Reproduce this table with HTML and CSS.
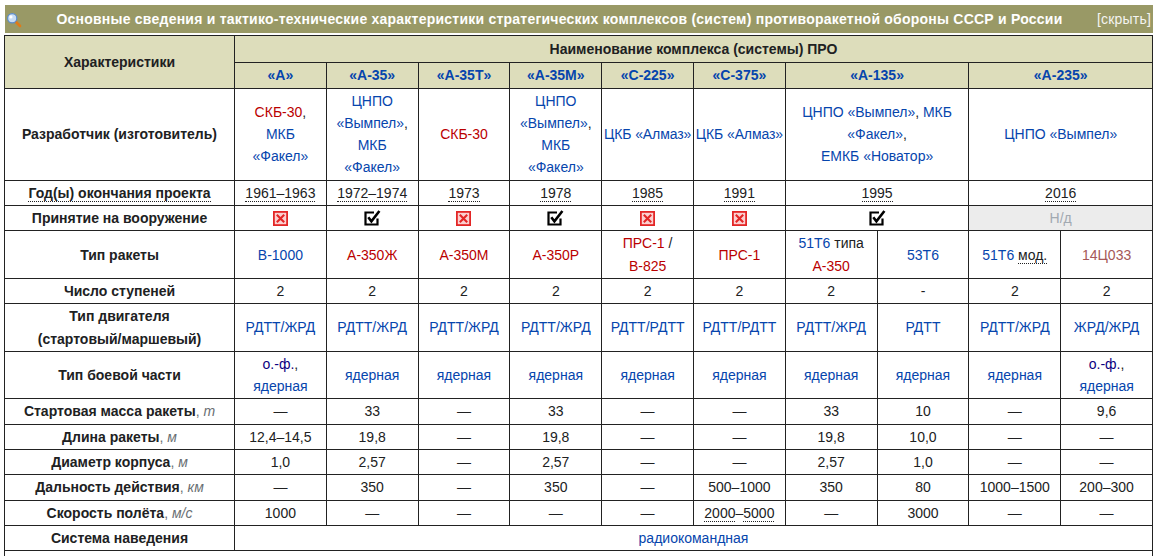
FILE: index.html
```html
<!DOCTYPE html>
<html lang="ru">
<head>
<meta charset="utf-8">
<title>ПРО СССР и России</title>
<link rel="stylesheet" href="styles.css">
</head>
<body>
<div class="page">
  <div class="titlebar">
    <svg class="icon" width="16" height="16" viewBox="0 0 16 16">
      <line x1="9.5" y1="9.5" x2="14" y2="14" stroke="#e07a18" stroke-width="2.6" stroke-linecap="round"/>
      <circle cx="6.2" cy="6.2" r="4.6" fill="#c9ddf4" stroke="#5b8ccc" stroke-width="1.2"/>
      <circle cx="4.9" cy="4.9" r="1.6" fill="#ffffff"/>
    </svg>
    <div class="title">Основные сведения и тактико-технические характеристики стратегических комплексов (систем) противоракетной обороны СССР и России</div>
    <div class="hide">[скрыть]</div>
  </div>
  <table class="ttx">
    <colgroup>
      <col class="c-lbl">
      <col><col><col><col><col><col><col><col><col><col>
    </colgroup>
    <thead>
      <tr class="h1">
        <th rowspan="2">Характеристики</th>
        <th colspan="10">Наименование комплекса (системы) ПРО</th>
      </tr>
      <tr class="h2">
        <th><a class="lk">«А»</a></th>
        <th><a class="lk">«А-35»</a></th>
        <th><a class="lk">«А-35Т»</a></th>
        <th><a class="lk">«А-35М»</a></th>
        <th><a class="lk">«С-225»</a></th>
        <th><a class="lk">«С-375»</a></th>
        <th colspan="2"><a class="lk">«А-135»</a></th>
        <th colspan="2"><a class="lk">«А-235»</a></th>
      </tr>
    </thead>
    <tbody>
      <tr>
        <td class="lbl">Разработчик (изготовитель)</td>
        <td><a class="red">СКБ-30</a>,<br><a class="lk">МКБ<br>«Факел»</a></td>
        <td><a class="lk">ЦНПО<br>«Вымпел»</a>,<br><a class="lk">МКБ<br>«Факел»</a></td>
        <td><a class="red">СКБ-30</a></td>
        <td><a class="lk">ЦНПО<br>«Вымпел»</a>,<br><a class="lk">МКБ<br>«Факел»</a></td>
        <td class="tight"><a class="lk">ЦКБ «Алмаз»</a></td>
        <td class="tight"><a class="lk">ЦКБ «Алмаз»</a></td>
        <td colspan="2"><a class="lk">ЦНПО «Вымпел»</a>, <a class="lk">МКБ<br>«Факел»</a>,<br><a class="lk">ЕМКБ «Новатор»</a></td>
        <td colspan="2"><a class="lk">ЦНПО «Вымпел»</a></td>
      </tr>
      <tr>
        <td class="lbl"><span class="dot">Год(ы) окончания проекта</span></td>
        <td><span class="dot">1961–1963</span></td>
        <td><span class="dot">1972–1974</span></td>
        <td><span class="dot">1973</span></td>
        <td><span class="dot">1978</span></td>
        <td><span class="dot">1985</span></td>
        <td><span class="dot">1991</span></td>
        <td colspan="2"><span class="dot">1995</span></td>
        <td colspan="2"><span class="dot">2016</span></td>
      </tr>
      <tr class="adopt">
        <td class="lbl">Принятие на вооружение</td>
        <td><svg class="no" width="15" height="15" viewBox="0 0 15 15"><rect x="0.9" y="0.9" width="13.2" height="13.2" fill="#fbd0d0" stroke="#e32626" stroke-width="1.8"/><path d="M3.8 3.8 L11.2 11.2 M11.2 3.8 L3.8 11.2" stroke="#e32626" stroke-width="2.1"/></svg></td>
        <td><svg class="yes" width="17" height="16" viewBox="0 0 17 16"><path d="M10 2.5 H1.5 V14.5 H13.5 V8.5" fill="none" stroke="#000" stroke-width="2.2"/><path d="M4.3 7.3 L7.4 11.4 L15.4 1" fill="none" stroke="#000" stroke-width="2.6"/></svg></td>
        <td><svg class="no" width="15" height="15" viewBox="0 0 15 15"><rect x="0.9" y="0.9" width="13.2" height="13.2" fill="#fbd0d0" stroke="#e32626" stroke-width="1.8"/><path d="M3.8 3.8 L11.2 11.2 M11.2 3.8 L3.8 11.2" stroke="#e32626" stroke-width="2.1"/></svg></td>
        <td><svg class="yes" width="17" height="16" viewBox="0 0 17 16"><path d="M10 2.5 H1.5 V14.5 H13.5 V8.5" fill="none" stroke="#000" stroke-width="2.2"/><path d="M4.3 7.3 L7.4 11.4 L15.4 1" fill="none" stroke="#000" stroke-width="2.6"/></svg></td>
        <td><svg class="no" width="15" height="15" viewBox="0 0 15 15"><rect x="0.9" y="0.9" width="13.2" height="13.2" fill="#fbd0d0" stroke="#e32626" stroke-width="1.8"/><path d="M3.8 3.8 L11.2 11.2 M11.2 3.8 L3.8 11.2" stroke="#e32626" stroke-width="2.1"/></svg></td>
        <td><svg class="no" width="15" height="15" viewBox="0 0 15 15"><rect x="0.9" y="0.9" width="13.2" height="13.2" fill="#fbd0d0" stroke="#e32626" stroke-width="1.8"/><path d="M3.8 3.8 L11.2 11.2 M11.2 3.8 L3.8 11.2" stroke="#e32626" stroke-width="2.1"/></svg></td>
        <td colspan="2"><svg class="yes" width="17" height="16" viewBox="0 0 17 16"><path d="M10 2.5 H1.5 V14.5 H13.5 V8.5" fill="none" stroke="#000" stroke-width="2.2"/><path d="M4.3 7.3 L7.4 11.4 L15.4 1" fill="none" stroke="#000" stroke-width="2.6"/></svg></td>
        <td colspan="2" class="na">Н/д</td>
      </tr>
      <tr>
        <td class="lbl">Тип ракеты</td>
        <td><a class="lk">В-1000</a></td>
        <td><a class="red">А-350Ж</a></td>
        <td><a class="red">А-350М</a></td>
        <td><a class="red">А-350Р</a></td>
        <td><a class="red">ПРС-1</a> /<br><a class="red">В-825</a></td>
        <td><a class="red">ПРС-1</a></td>
        <td><a class="lk">51Т6</a> типа<br><a class="red">А-350</a></td>
        <td><a class="lk">53Т6</a></td>
        <td><a class="lk">51Т6</a> <span class="dot">мод.</span></td>
        <td><a class="brown">14Ц033</a></td>
      </tr>
      <tr>
        <td class="lbl">Число ступеней</td>
        <td>2</td><td>2</td><td>2</td><td>2</td><td>2</td><td>2</td><td>2</td><td>-</td><td>2</td><td>2</td>
      </tr>
      <tr>
        <td class="lbl">Тип двигателя<br>(стартовый/маршевый)</td>
        <td><a class="lk">РДТТ/ЖРД</a></td>
        <td><a class="lk">РДТТ/ЖРД</a></td>
        <td><a class="lk">РДТТ/ЖРД</a></td>
        <td><a class="lk">РДТТ/ЖРД</a></td>
        <td><a class="lk">РДТТ/РДТТ</a></td>
        <td><a class="lk">РДТТ/РДТТ</a></td>
        <td><a class="lk">РДТТ/ЖРД</a></td>
        <td><a class="lk">РДТТ</a></td>
        <td><a class="lk">РДТТ/ЖРД</a></td>
        <td><a class="lk">ЖРД/ЖРД</a></td>
      </tr>
      <tr>
        <td class="lbl">Тип боевой части</td>
        <td><a class="navy">о.-ф.</a>,<br><a class="lk">ядерная</a></td>
        <td><a class="lk">ядерная</a></td>
        <td><a class="lk">ядерная</a></td>
        <td><a class="lk">ядерная</a></td>
        <td><a class="lk">ядерная</a></td>
        <td><a class="lk">ядерная</a></td>
        <td><a class="lk">ядерная</a></td>
        <td><a class="lk">ядерная</a></td>
        <td><a class="lk">ядерная</a></td>
        <td><a class="navy">о.-ф.</a>,<br><a class="lk">ядерная</a></td>
      </tr>
      <tr>
        <td class="lbl">Стартовая масса ракеты<span class="unit">, <i>т</i></span></td>
        <td>—</td><td>33</td><td>—</td><td>33</td><td>—</td><td>—</td><td>33</td><td>10</td><td>—</td><td>9,6</td>
      </tr>
      <tr>
        <td class="lbl">Длина ракеты<span class="unit">, <i>м</i></span></td>
        <td>12,4–14,5</td><td>19,8</td><td>—</td><td>19,8</td><td>—</td><td>—</td><td>19,8</td><td>10,0</td><td>—</td><td>—</td>
      </tr>
      <tr>
        <td class="lbl">Диаметр корпуса<span class="unit">, <i>м</i></span></td>
        <td>1,0</td><td>2,57</td><td>—</td><td>2,57</td><td>—</td><td>—</td><td>2,57</td><td>1,0</td><td>—</td><td>—</td>
      </tr>
      <tr>
        <td class="lbl">Дальность действия<span class="unit">, <i>км</i></span></td>
        <td>—</td><td>350</td><td>—</td><td>350</td><td>—</td><td>500–1000</td><td>350</td><td>80</td><td>1000–1500</td><td>200–300</td>
      </tr>
      <tr>
        <td class="lbl">Скорость полёта<span class="unit">, <i>м/с</i></span></td>
        <td>1000</td><td>—</td><td>—</td><td>—</td><td>—</td><td><span class="dot">2000</span>–<span class="dot">5000</span></td><td>—</td><td>3000</td><td>—</td><td>—</td>
      </tr>
      <tr>
        <td class="lbl">Система наведения</td>
        <td colspan="10"><a class="lk">радиокомандная</a></td>
      </tr>
      <tr class="tail">
        <td colspan="11"></td>
      </tr>
    </tbody>
  </table>
</div>
</body>
</html>
```

FILE: styles.css
```css
html, body {
  margin: 0;
  padding: 0;
  background: #ffffff;
}

body {
  font-family: "Liberation Sans", Arial, sans-serif;
  font-size: 14px;
  line-height: 22.3px;
  color: #202122;
}

.page {
  width: 1149px;
  padding: 5px 0 0 4px;
}

.titlebar {
  display: flex;
  align-items: center;
  height: 28px;
  margin-left: 1px;
  margin-bottom: 2px;
  background: #999966;
  color: #ffffff;
}

.titlebar .icon {
  flex: none;
  margin: 2px 0 0 1px;
}

.titlebar .title {
  flex: 1;
  text-align: center;
  font-weight: bold;
  white-space: nowrap;
  letter-spacing: 0.23px;
}

.titlebar .hide {
  flex: none;
  padding-right: 2px;
  color: #f4f4f0;
  letter-spacing: 0.2px;
}

.ttx {
  width: 1149px;
  border-collapse: collapse;
  table-layout: fixed;
}

.ttx .c-lbl {
  width: 230px;
}

.ttx th,
.ttx td {
  border: 1px solid #222222;
  padding: 1px 1px;
  text-align: center;
  vertical-align: middle;
}

.ttx th {
  background: #ddddbb;
  font-weight: bold;
  color: #202122;
}

.ttx .h1 th {
  padding: 2px 1px;
}

.ttx td.lbl {
  font-weight: bold;
  color: #202122;
}

.ttx td.tight {
  padding: 1px 0;
  white-space: nowrap;
  letter-spacing: -0.1px;
}

.ttx .tail td {
  height: 22px;
}

.unit {
  font-weight: normal;
  color: #6a6f73;
}

.lk {
  color: #0645ad;
}

.red {
  color: #ba0000;
}

.brown {
  color: #a55858;
}

.navy {
  color: #0b0080;
}

.dot {
  border-bottom: 1px dotted #202122;
}

.adopt svg {
  display: inline-block;
  vertical-align: middle;
  margin-top: -2px;
}

.ttx td.na {
  background: #ececec;
  color: #a2a9b1;
}
```
